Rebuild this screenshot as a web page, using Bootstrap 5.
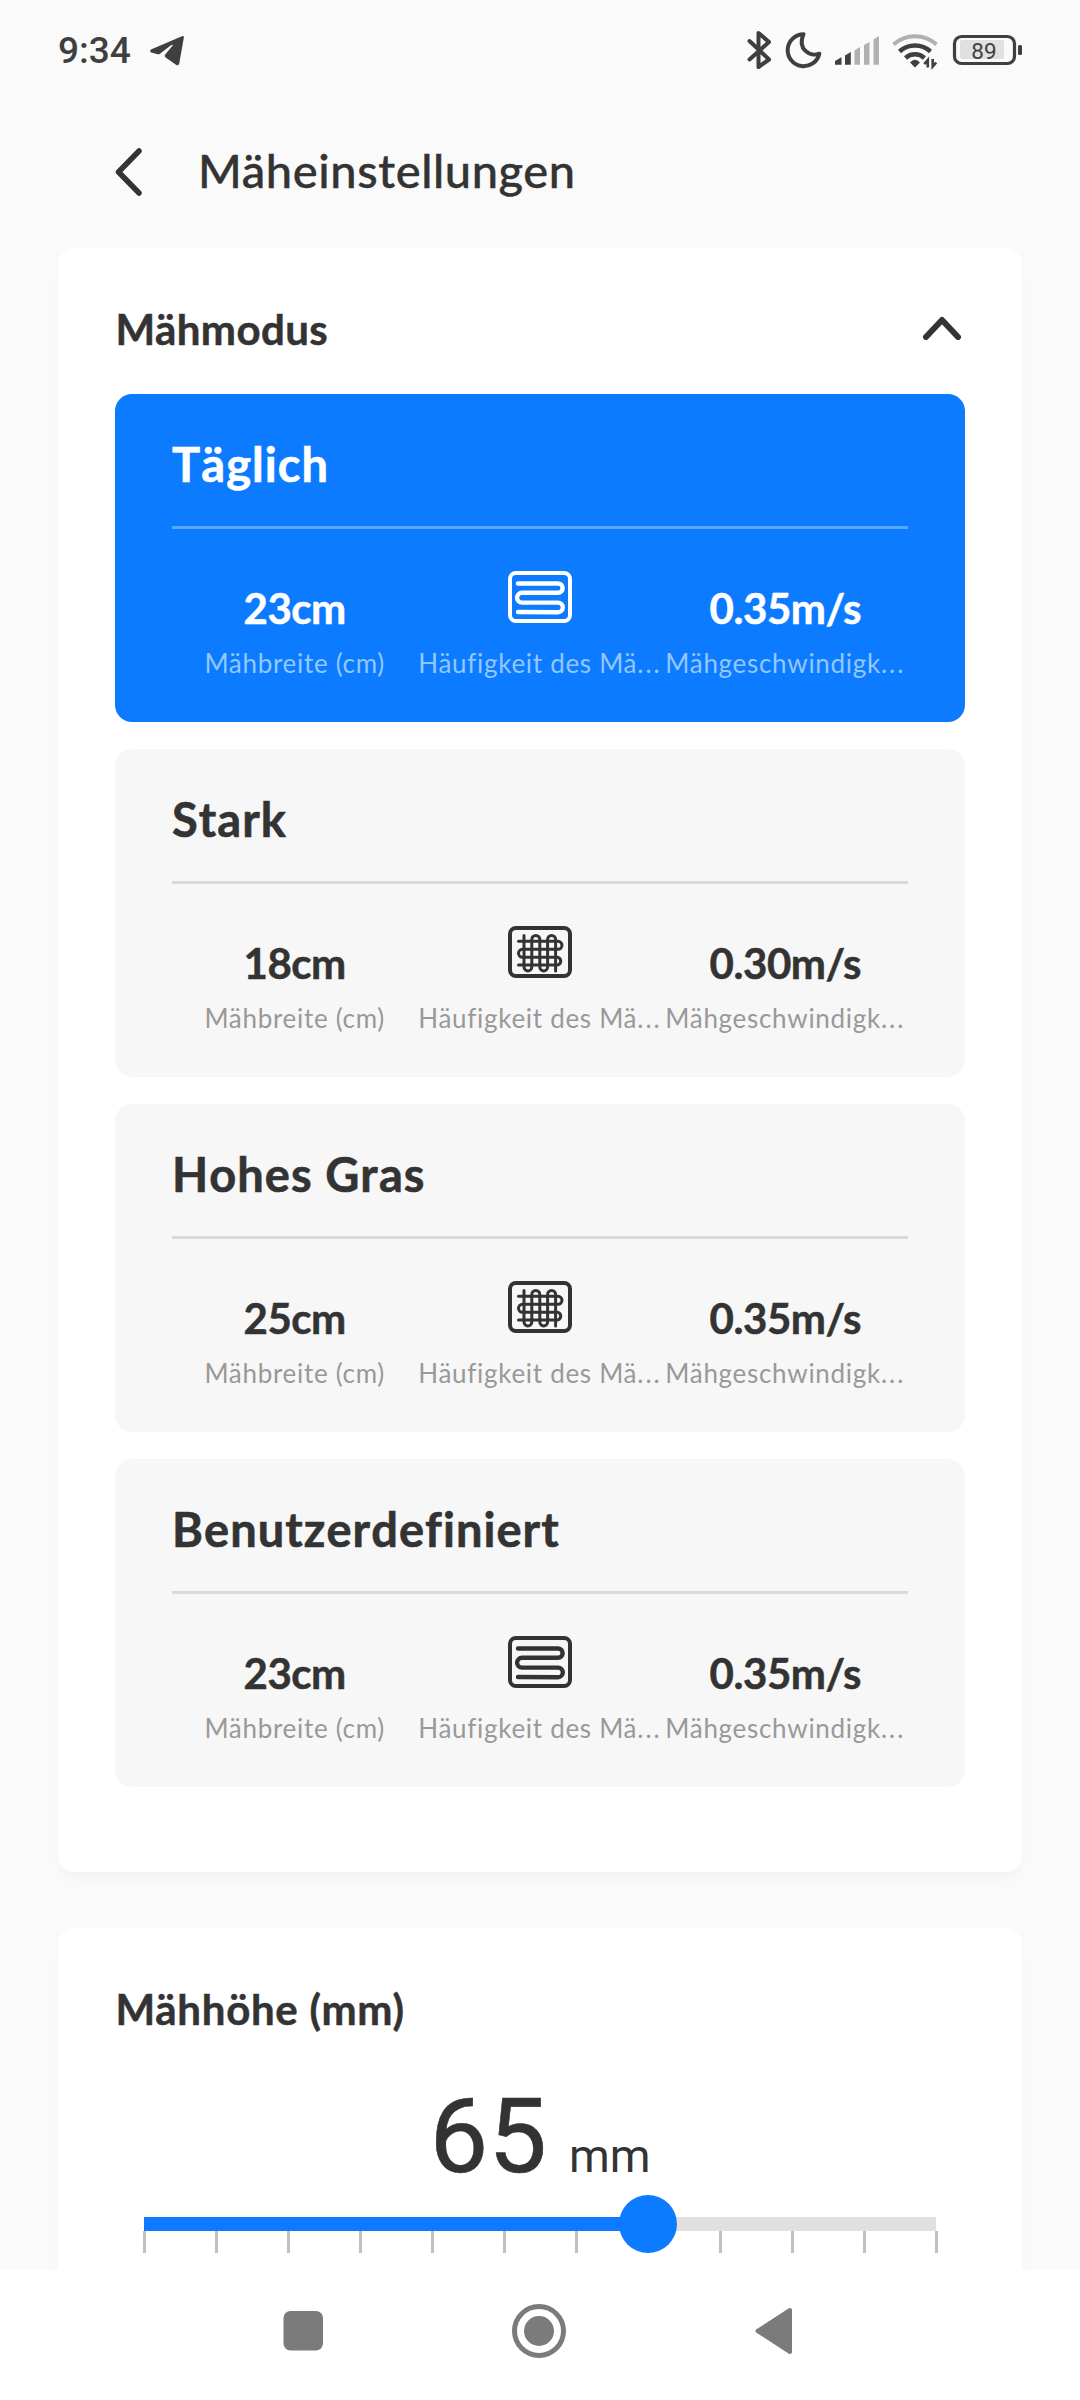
<!DOCTYPE html>
<html lang="de">
<head>
<meta charset="utf-8">
<meta name="viewport" content="width=device-width, initial-scale=1">
<title>Mäheinstellungen</title>
<link href="https://cdn.jsdelivr.net/npm/bootstrap@5.3.0/dist/css/bootstrap.min.css" rel="stylesheet">
<style>
  body { background: #fafafa; color: #333; font-family: Lato, "Noto Sans", sans-serif; }
  .screen { width: 1080px; height: 2400px; overflow: hidden; }
  .statusbar { height: 100px; padding: 2px 57px 0 58px; color: #3f3f3f; font-family: Roboto, sans-serif; }
  .clock { font-size: 37px; font-weight: 500; line-height: 98px; width: 92px; }
  .status-icons { width: 276px; height: 100px; margin-top: -2px; }
  .appbar { height: 148px; padding: 0 0 0 114px; }
  .appbar svg { margin-top: -5px; }
  .appbar h1 { font-size: 47px; font-weight: 500; line-height: 60px; letter-spacing: .6px; margin-left: 54px; margin-top: -8px; -webkit-text-stroke: .4px currentColor; }
  .content { height: 2022px; overflow: hidden; padding: 0 58px; }
  .panel { background: #fff; border-radius: 17px; padding: 0 57px; box-shadow: 0 10px 20px -7px rgba(0,0,0,.05); }
  .panel-modes { height: 1623.5px; margin-bottom: 56.5px; }
  .panel-head { height: 146px; padding: 15px 3px 0 0; }
  .panel-title { font-size: 42px; font-weight: 700; line-height: 50px; letter-spacing: .4px; padding-left: .5px; -webkit-text-stroke: .5px currentColor; }
  .panel-height .panel-title { letter-spacing: .7px; }
  .mode-list { gap: 27.5px; }
  .mode { height: 327.5px; border-radius: 17px; background: #f7f7f7; padding: 37px 57px 0 57px; color: #333; --sub: #999; --rule: #dbdbdb; }
  .mode.active { background: #0c7bff; color: #fff; --sub: #93c7ff; --rule: #5aa7ff; }
  .mode h3 { font-size: 47px; font-weight: 700; line-height: 66px; letter-spacing: 1.05px; font-kerning: none; -webkit-text-stroke: .6px currentColor; }
  .rule { height: 3px; background: var(--rule); margin-top: 29px; margin-bottom: 42px; }
  .metric-top { height: 75px; }
  .metric-val { font-size: 42px; font-weight: 700; line-height: 50px; padding-top: 12px; letter-spacing: -.45px; -webkit-text-stroke: .5px currentColor; }
  .metric-sub { font-size: 26px; line-height: 34px; letter-spacing: .7px; color: var(--sub); white-space: nowrap; }
  .dots { letter-spacing: 2px; }
  .panel-height { height: 400px; padding-top: 56px; }
  .readout { font-family: Roboto, sans-serif; height: 176px; padding-top: 28px; gap: 22px; }
  .readout .num { font-size: 104.5px; line-height: 150px; -webkit-text-stroke: .6px currentColor; }
  .readout .unit { font-size: 46.5px; line-height: 60px; }
  .slider { margin: 0 29px; padding-top: 7px; height: 60px; position: relative; }
  .track { height: 14px; background: #e0e0e0; }
  .fill { height: 14px; background: #0c7bff; }
  .thumb { position: absolute; top: -15px; width: 58px; height: 58px; margin-left: -29px; border-radius: 50%; background: #0c7bff; }
  .ticks { margin: 0 -1.5px; }
  .ticks i { width: 3px; height: 22px; background: #bfbfbf; }
  .navkeys { height: 130px; background: #fff; }
</style>
</head>
<body>
<svg width="0" height="0" class="position-absolute">
  <symbol id="snake" viewBox="0 0 64 52">
    <g fill="none" stroke="currentColor" stroke-linecap="round">
      <rect x="2" y="2" width="60" height="48" rx="6" stroke-width="4"/>
      <path d="M10 12.5H50a4.6 4.6 0 0 1 0 9.3H14a4.9 4.9 0 0 0 0 9.8H50a4.8 4.8 0 0 1 0 9.6L10 41" stroke-width="4.4"/>
    </g>
  </symbol>
  <symbol id="weave" viewBox="0 0 64 52">
    <g fill="none" stroke="currentColor" stroke-linecap="round">
      <rect x="2" y="2" width="60" height="48" rx="6" stroke-width="4"/>
      <path d="M10.5 15.300H50a4 4 0 0 1 0 8H14.500a4 4 0 0 0 0 8H50a4 4 0 0 1 0 7.600H10.500" stroke-width="3"/>
      <path d="M16 9.500V41a3.900 4 0 0 0 7.800 0V13.500a4 4 0 0 1 8 0V41a3.900 4 0 0 0 7.800 0V13.500a4 4 0 0 1 8 0V45" stroke-width="3"/>
    </g>
  </symbol>
</svg>

<main class="screen d-flex flex-column">
  <header class="statusbar d-flex align-items-center flex-shrink-0">
    <span class="clock">9:34</span>
    <svg width="34" height="30" viewBox="0 0 34 30" class="me-auto" fill="#3f3f3f"><path d="M32 .2 1.5 13.2C-.3 14-.2 16 1.6 16.600L7.500 18.300Q8.600 18.500 9.600 17.900L21 9.300C22.600 8.200 23.400 8.900 22.300 10L15.400 18.200Q14 20 16 21.800L26 28.700C27.700 29.800 29 29.200 29.300 27.300L33.800 1.700C34 .4 33.200-.3 32 .2Z"/></svg>
    <svg class="status-icons" viewBox="747 0 276 100">
      <path d="M749.500 41 769 59.500 758.500 67V33L769 42 749.500 59.500" fill="none" stroke="#3f3f3f" stroke-width="4" stroke-linecap="round" stroke-linejoin="round"/>
      <path d="M803.500 34.200A16 16 0 1 0 819.300 53.700C810 57.500 797 49 803.500 34.200Z" fill="none" stroke="#3f3f3f" stroke-width="4" stroke-linejoin="round"/>
      <g fill="#3f3f3f"><path d="M835 61 841.500 57.300V64.700H835Z"/><path d="M845 55.500 850.800 52V64.700H845Z"/></g>
      <g fill="#b0b0b0"><path d="M854.500 50.500 860 47V64.700H854.500Z"/><path d="M864 45 869.500 42V64.700H864Z"/><path d="M873.500 39.500 879 36V64.700H873.500Z"/></g>
      <g fill="none" stroke="#3f3f3f" stroke-width="4.600">
        <path d="M893.500 44.500A32 32 0 0 1 936.500 44.500" stroke="#b0b0b0" stroke-width="4"/>
        <path d="M899.500 51.500A23 23 0 0 1 930.500 51.500"/>
        <path d="M905.500 58A14 14 0 0 1 924.500 58"/>
      </g>
      <path d="M910 62.500Q915 57 920 62.500L915 67.500Z" fill="#3f3f3f"/>
      <path d="M927.800 67.500V60L924.300 64.200M932.700 59V66.500L936.200 62.500" fill="none" stroke="#3f3f3f" stroke-width="2.600"/>
      <rect x="960" y="40" width="44" height="19" rx="2" fill="#e0e0e0"/>
      <rect x="954.500" y="36.500" width="60" height="27" rx="7" fill="none" stroke="#3f3f3f" stroke-width="3.200"/>
      <rect x="1018" y="45" width="4" height="10" rx="1.500" fill="#3f3f3f"/>
      <text x="984" y="58.700" font-size="22.500" text-anchor="middle" fill="#3f3f3f">89</text>
    </svg>
  </header>

  <div class="appbar d-flex align-items-center flex-shrink-0">
    <svg width="30" height="50" viewBox="0 0 30 50"><path d="M25 4 4.500 25 25 46" fill="none" stroke="#333" stroke-width="5.500" stroke-linecap="round" stroke-linejoin="round"/></svg>
    <h1 class="mb-0">Mäheinstellungen</h1>
  </div>

  <div class="content flex-shrink-0">
    <section class="panel panel-modes">
      <div class="panel-head d-flex align-items-center justify-content-between">
        <h2 class="panel-title mb-0">Mähmodus</h2>
        <svg width="40" height="26" viewBox="0 0 40 26" class="mb-1"><path d="M4 23 20 6 36 23" fill="none" stroke="#333" stroke-width="6" stroke-linecap="round" stroke-linejoin="round"/></svg>
      </div>
      <div class="mode-list d-flex flex-column">
        <article class="mode active">
          <h3 class="mb-0">Täglich</h3><div class="rule"></div>
          <div class="row g-0 text-center">
            <div class="col-4"><div class="metric-top metric-val">23cm</div><div class="metric-sub">Mähbreite (cm)</div></div>
            <div class="col-4"><div class="metric-top"><svg width="64" height="52" class="d-block mx-auto"><use href="#snake"/></svg></div><div class="metric-sub">Häufigkeit des Mä<span class="dots">...</span></div></div>
            <div class="col-4"><div class="metric-top metric-val">0.35m/s</div><div class="metric-sub">Mähgeschwindigk<span class="dots">...</span></div></div>
          </div>
        </article>
        <article class="mode">
          <h3 class="mb-0">Stark</h3><div class="rule"></div>
          <div class="row g-0 text-center">
            <div class="col-4"><div class="metric-top metric-val">18cm</div><div class="metric-sub">Mähbreite (cm)</div></div>
            <div class="col-4"><div class="metric-top"><svg width="64" height="52" class="d-block mx-auto"><use href="#weave"/></svg></div><div class="metric-sub">Häufigkeit des Mä<span class="dots">...</span></div></div>
            <div class="col-4"><div class="metric-top metric-val">0.30m/s</div><div class="metric-sub">Mähgeschwindigk<span class="dots">...</span></div></div>
          </div>
        </article>
        <article class="mode">
          <h3 class="mb-0">Hohes Gras</h3><div class="rule"></div>
          <div class="row g-0 text-center">
            <div class="col-4"><div class="metric-top metric-val">25cm</div><div class="metric-sub">Mähbreite (cm)</div></div>
            <div class="col-4"><div class="metric-top"><svg width="64" height="52" class="d-block mx-auto"><use href="#weave"/></svg></div><div class="metric-sub">Häufigkeit des Mä<span class="dots">...</span></div></div>
            <div class="col-4"><div class="metric-top metric-val">0.35m/s</div><div class="metric-sub">Mähgeschwindigk<span class="dots">...</span></div></div>
          </div>
        </article>
        <article class="mode">
          <h3 class="mb-0">Benutzerdefiniert</h3><div class="rule"></div>
          <div class="row g-0 text-center">
            <div class="col-4"><div class="metric-top metric-val">23cm</div><div class="metric-sub">Mähbreite (cm)</div></div>
            <div class="col-4"><div class="metric-top"><svg width="64" height="52" class="d-block mx-auto"><use href="#snake"/></svg></div><div class="metric-sub">Häufigkeit des Mä<span class="dots">...</span></div></div>
            <div class="col-4"><div class="metric-top metric-val">0.35m/s</div><div class="metric-sub">Mähgeschwindigk<span class="dots">...</span></div></div>
          </div>
        </article>
      </div>
    </section>

    <section class="panel panel-height">
      <h2 class="panel-title mb-0">Mähhöhe (mm)</h2>
      <div class="readout d-flex justify-content-center align-items-baseline">
        <span class="num">65</span><span class="unit">mm</span>
      </div>
      <div class="slider">
        <div class="track"><div class="fill" style="width:63.636%"></div></div>
        <div class="ticks d-flex justify-content-between"><i></i><i></i><i></i><i></i><i></i><i></i><i></i><i></i><i></i><i></i><i></i><i></i></div>
        <div class="thumb" style="left:63.636%"></div>
      </div>
    </section>
  </div>

  <nav class="navkeys flex-shrink-0">
    <svg width="1080" height="130" viewBox="0 2270 1080 130" class="d-block" fill="#7b7b7b">
      <rect x="283.500" y="2311" width="39.500" height="39.500" rx="7"/>
      <circle cx="539" cy="2331" r="24.500" fill="none" stroke="#7b7b7b" stroke-width="5"/>
      <circle cx="539" cy="2331" r="15"/>
      <path d="M757.500 2331 790 2310V2352Z" stroke="#7b7b7b" stroke-width="4" stroke-linejoin="round"/>
    </svg>
  </nav>
</main>
<script src="https://cdn.jsdelivr.net/npm/bootstrap@5.3.0/dist/js/bootstrap.bundle.min.js"></script>
</body>
</html>
